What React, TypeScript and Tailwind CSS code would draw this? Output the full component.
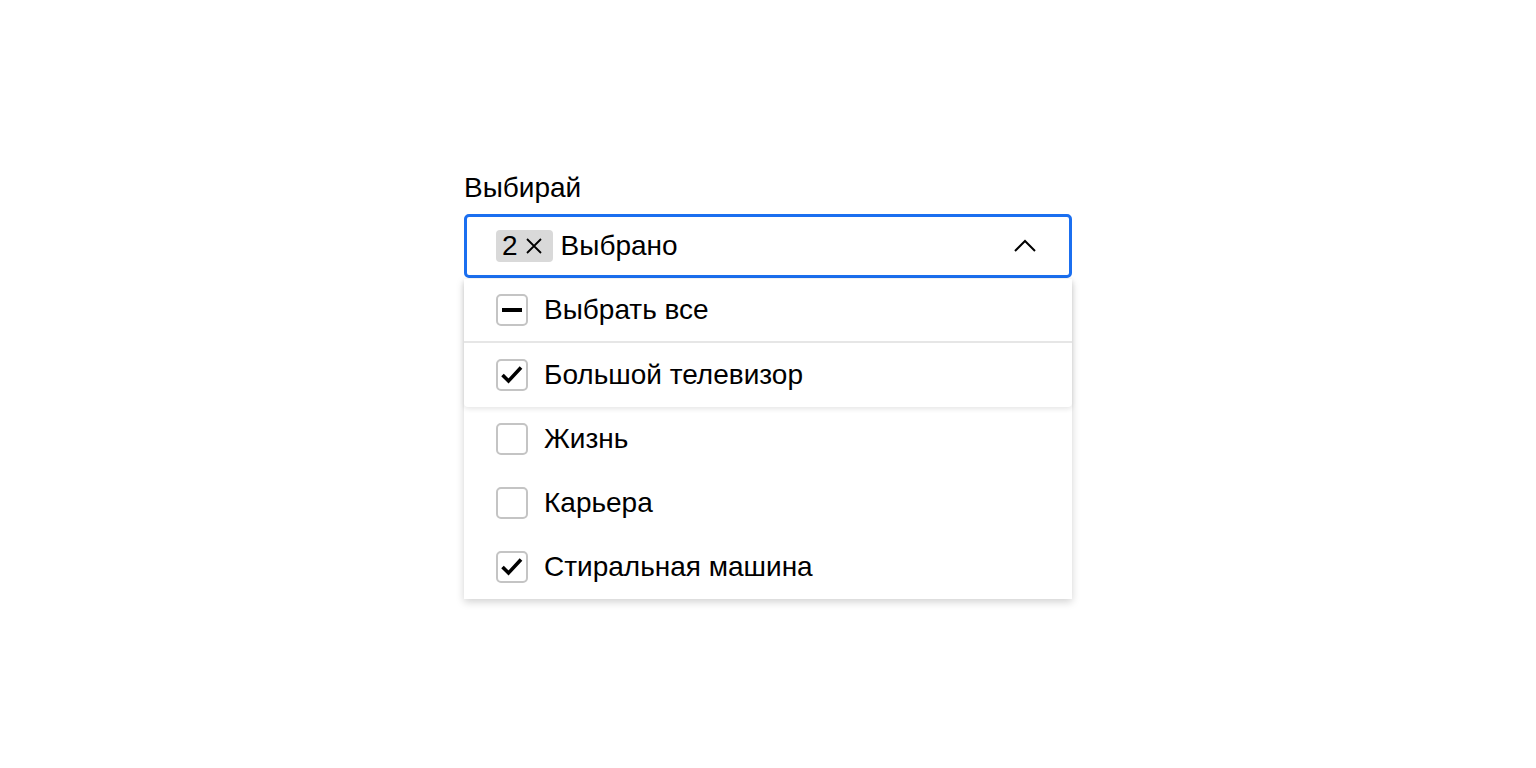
import { useState } from "react";

type Item = { id: string; label: string };

const items: Item[] = [
    { id: "tv", label: "Большой телевизор" },
    { id: "life", label: "Жизнь" },
    { id: "career", label: "Карьера" },
    { id: "washer", label: "Стиральная машина" },
];

function Box({ state }: { state: "on" | "off" | "mixed" }) {
    return (
        <span className="flex h-8 w-8 shrink-0 items-center justify-center rounded-[5px] border-2 border-[#c4c4c4] bg-white">
            {state === "on" && (
                <svg width="26" height="26" viewBox="0 0 26 26" fill="none">
                    <path d="M3.5 13 L9.5 19 L22 5.5" stroke="#000" strokeWidth="3.6" />
                </svg>
            )}
            {state === "mixed" && <span className="h-[4px] w-[20px] bg-black" />}
        </span>
    );
}

export default function App() {
    const [selected, setSelected] = useState<string[]>(["tv", "washer"]);

    const toggle = (id: string) =>
        setSelected(prev => (prev.includes(id) ? prev.filter(i => i !== id) : [...prev, id]));

    const allState = selected.length === 0 ? "off" : selected.length === items.length ? "on" : "mixed";
    const pinned = items.filter(i => i.id === "tv");
    const rest = items.filter(i => i.id !== "tv");

    const row = (it: Item) => (
        <div key={it.id} className="flex h-16 items-center gap-4 px-8 cursor-pointer" onClick={() => toggle(it.id)}>
            <Box state={selected.includes(it.id) ? "on" : "off"} />
            <span>{it.label}</span>
        </div>
    );

    return (
        <div className="min-h-screen bg-white font-['Liberation_Sans',Arial,sans-serif] text-black">
            <div className="mx-auto w-[608px] pt-[172px]">
                <div className="text-[28px] leading-[32px] mb-[10px]">Выбирай</div>

                <div className="flex h-[64px] items-center rounded-[5px] border-[3px] border-[#1b6ff0] pl-[29px] pr-[32px]">
                    <span className="flex h-8 items-center gap-[7px] rounded-[4px] bg-[#d9d9d9] pl-[6px] pr-[10px] text-[28px] leading-none">
                        {selected.length}
                        <svg width="18" height="18" viewBox="0 0 18 18">
                            <path d="M2 2 L16 16 M16 2 L2 16" stroke="#000" strokeWidth="1.8" />
                        </svg>
                    </span>
                    <span className="ml-2 text-[28px]">Выбрано</span>
                    <svg className="ml-auto" width="24" height="24" viewBox="0 0 24 24" fill="none">
                        <path d="M2 17 L12 7 L22 17" stroke="#000" strokeWidth="2" />
                    </svg>
                </div>

                <div className="mt-px bg-white text-[28px] shadow-[0_3px_8px_rgba(0,0,0,0.18)]">
                    <div className="rounded-b-[4px] bg-white shadow-[0_2px_5px_rgba(0,0,0,0.1)]">
                        <div
                            className="flex h-16 items-center gap-4 px-8 border-b-2 border-[#e6e6e6] cursor-pointer"
                            onClick={() => setSelected(allState === "on" ? [] : items.map(i => i.id))}
                        >
                            <Box state={allState} />
                            <span>Выбрать все</span>
                        </div>
                        {pinned.map(row)}
                    </div>
                    {rest.map(row)}
                </div>
            </div>
        </div>
    );
}
